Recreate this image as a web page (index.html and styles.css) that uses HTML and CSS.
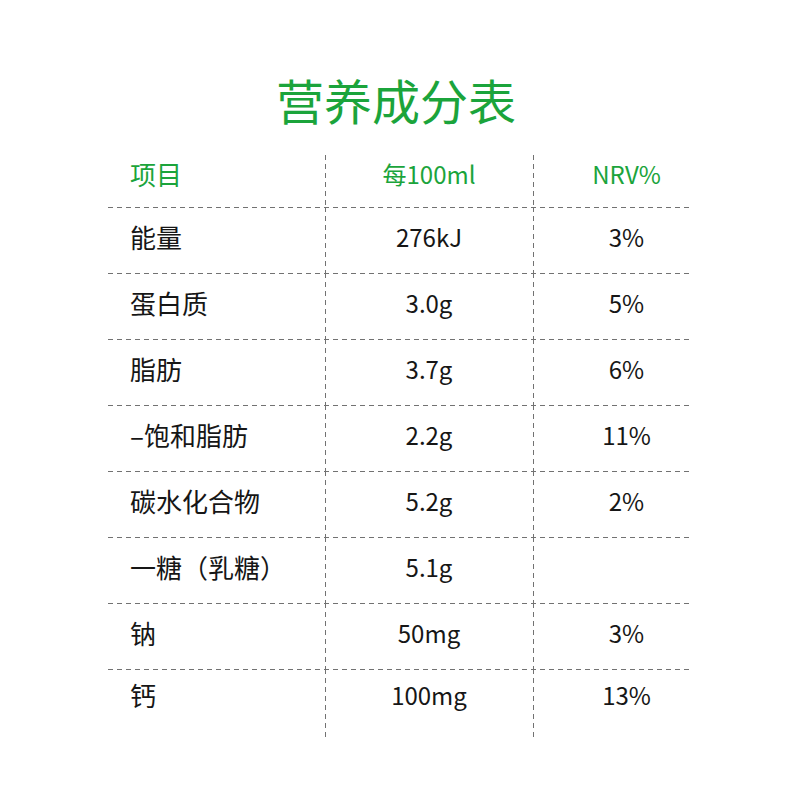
FILE: index.html
```html
<!DOCTYPE html>
<html lang="zh-CN">
<head>
<meta charset="utf-8">
<title>营养成分表</title>
<link rel="stylesheet" href="styles.css">
</head>
<body>
<div class="page">
  <h1 class="title">营养成分表</h1>
  <div class="table">
    <div class="row head">
      <div class="cell c1">项目</div>
      <div class="cell c2">每100ml</div>
      <div class="cell c3">NRV%</div>
    </div>
    <div class="row">
      <div class="cell c1">能量</div>
      <div class="cell c2">276kJ</div>
      <div class="cell c3">3%</div>
    </div>
    <div class="row">
      <div class="cell c1">蛋白质</div>
      <div class="cell c2">3.0g</div>
      <div class="cell c3">5%</div>
    </div>
    <div class="row">
      <div class="cell c1">脂肪</div>
      <div class="cell c2">3.7g</div>
      <div class="cell c3">6%</div>
    </div>
    <div class="row">
      <div class="cell c1">–饱和脂肪</div>
      <div class="cell c2">2.2g</div>
      <div class="cell c3">11%</div>
    </div>
    <div class="row">
      <div class="cell c1">碳水化合物</div>
      <div class="cell c2">5.2g</div>
      <div class="cell c3">2%</div>
    </div>
    <div class="row">
      <div class="cell c1">一糖（乳糖）</div>
      <div class="cell c2">5.1g</div>
      <div class="cell c3"></div>
    </div>
    <div class="row">
      <div class="cell c1">钠</div>
      <div class="cell c2">50mg</div>
      <div class="cell c3">3%</div>
    </div>
    <div class="row last">
      <div class="cell c1">钙</div>
      <div class="cell c2">100mg</div>
      <div class="cell c3">13%</div>
    </div>
  </div>
</div>
</body>
</html>
```
FILE: styles.css
```css
html, body {
  margin: 0;
  padding: 0;
  background: #ffffff;
}
body {
  font-family: "Noto Sans CJK SC", "Noto Sans", sans-serif;
  color: #161616;
}
.page {
  width: 800px;
  height: 800px;
  padding-top: 71px;
  box-sizing: border-box;
}
.title {
  margin: 0;
  height: 84px;
  line-height: 56px;
  font-size: 48px;
  font-weight: 400;
  color: #1ba43b;
  text-align: center;
  padding-right: 8px;
}
.table {
  margin-left: 108px;
  width: 584px;
}
.row {
  display: grid;
  grid-template-columns: 217px 208px 159px;
  height: 66px;
  background-image: repeating-linear-gradient(to right, #727272 0 5px, transparent 5px 9px);
  background-size: 100% 1px;
  background-repeat: no-repeat;
  background-position: 0 0;
}
.row.head {
  height: 52px;
  background-image: none;
}
.row.last {
  height: 68px;
}
.cell {
  display: flex;
  align-items: center;
  font-size: 24px;
  line-height: 1;
  padding-bottom: 6px;
}
.c1 {
  padding-left: 22px;
  font-size: 26px;
}
.head .cell {
  color: #1ba43b;
  padding-bottom: 14px;
}
.last .cell {
  padding-bottom: 16px;
}
.c2, .c3 {
  justify-content: center;
  background-image: repeating-linear-gradient(to bottom, #727272 0 5px, transparent 5px 9px);
  background-size: 1px 100%;
  background-repeat: no-repeat;
  background-position: 0 0;
}
.c3 {
  padding-left: 28px;
}
```
